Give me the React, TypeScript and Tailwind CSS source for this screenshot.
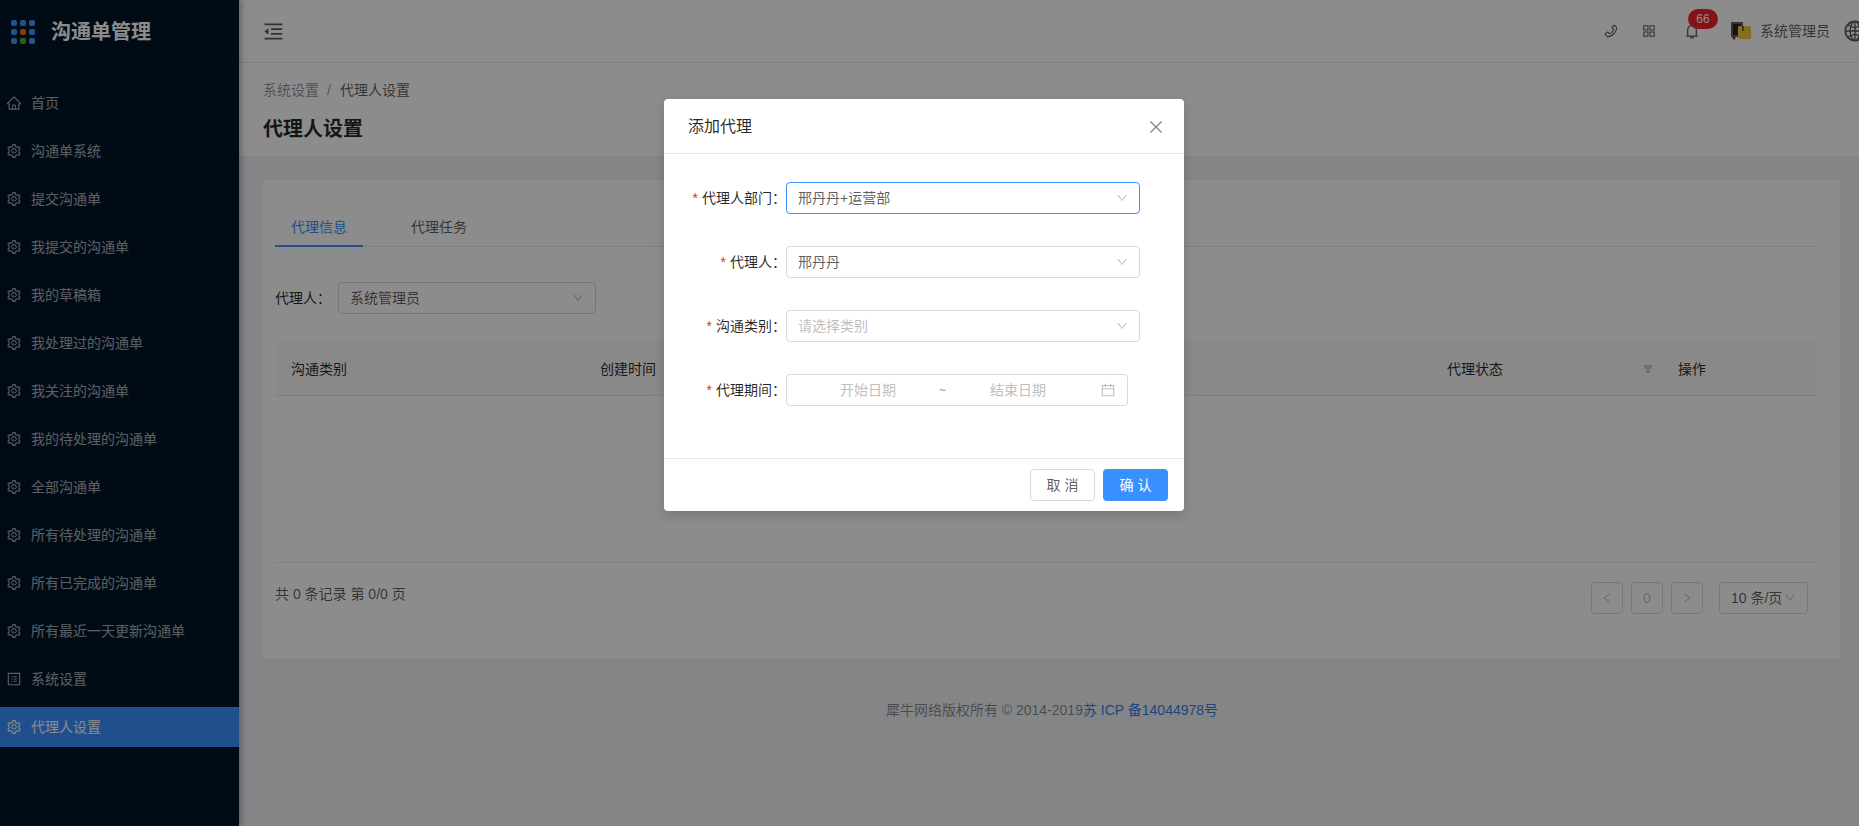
import {
  AiFillFilter,
  AiOutlineAppstore,
  AiOutlineBell,
  AiOutlineCalendar,
  AiOutlineClose,
  AiOutlineDown,
  AiOutlineGlobal,
  AiOutlineHome,
  AiOutlineLeft,
  AiOutlineMenuFold,
  AiOutlinePhone,
  AiOutlineProfile,
  AiOutlineRight,
  AiOutlineSetting,
} from "react-icons/ai";

const menu = [
  "首页",
  "沟通单系统",
  "提交沟通单",
  "我提交的沟通单",
  "我的草稿箱",
  "我处理过的沟通单",
  "我关注的沟通单",
  "我的待处理的沟通单",
  "全部沟通单",
  "所有待处理的沟通单",
  "所有已完成的沟通单",
  "所有最近一天更新沟通单",
  "系统设置",
  "代理人设置",
];

const dots = [
  "bg-[#3a9bff]", "bg-[#3a9bff]", "bg-[#3a9bff]",
  "bg-[#3a9bff]", "bg-[#f26a0f]", "bg-[#3a9bff]",
  "bg-[#3a9bff]", "bg-[#52b01c]", "bg-[#3a9bff]",
];

function Sidebar() {
  return (
    <aside className="z-10 flex w-[239px] shrink-0 flex-col bg-[#001529] text-white/65 shadow-[2px_0_6px_rgba(0,21,41,0.35)]">
      <div className="flex h-[64px] items-center pl-[11px]">
        <div className="-mt-[1px] grid grid-cols-3 gap-[3px]">
          {dots.map((c, i) => (
            <span key={i} className={`h-[6px] w-[6px] rounded-[2px] ${c}`} />
          ))}
        </div>
        <span className="ml-4 text-[20px] font-bold text-white">沟通单管理</span>
      </div>
      <nav className="mt-[19px] flex flex-col gap-2">
        {menu.map((name) => (
          <div
            key={name}
            className={`flex h-10 items-center pl-[6px] text-sm ${
              name === "代理人设置" ? "bg-[#3a90ff] text-white" : ""
            }`}
          >
            {name === "首页" ? (
              <AiOutlineHome className="mr-[9px] text-base" />
            ) : name === "系统设置" ? (
              <AiOutlineProfile className="mr-[9px] text-base" />
            ) : (
              <AiOutlineSetting className="mr-[9px] text-base" />
            )}
            {name}
          </div>
        ))}
      </nav>
    </aside>
  );
}

function Topbar() {
  return (
    <header className="flex h-[63px] shrink-0 items-center justify-between overflow-hidden border-b border-[#e8e8e8] bg-white pl-[23px]">
      <AiOutlineMenuFold className="text-[23px] text-black/65" />
      <div className="flex items-center text-sm text-black/65">
        <AiOutlinePhone className="mr-[22px] text-base" />
        <AiOutlineAppstore className="mr-[26px] text-base" />
        <div className="relative mr-[30px]">
          <AiOutlineBell className="text-lg" />
          <span className="absolute -top-[13px] left-[5px] flex h-5 w-[30px] items-center justify-center rounded-full bg-[#f5222d] text-xs text-white">
            66
          </span>
        </div>
        <svg viewBox="0 0 20 18" className="mr-[9px] h-[18px] w-5">
          <rect x="0" y="0" width="12" height="15" fill="#6a5a5e" />
          <rect x="2" y="2" width="8" height="11" fill="#2a2020" />
          <rect x="7" y="4" width="13" height="13" rx="1" fill="#f0c840" />
          <rect x="11" y="4" width="2" height="5" fill="#8a6510" />
          <circle cx="3" cy="16" r="1.5" fill="#9c1b1b" />
        </svg>
        <span className="mr-[13px]">系统管理员</span>
        <AiOutlineGlobal className="-mr-[8px] shrink-0 text-2xl" />
      </div>
    </header>
  );
}

function Select({ value, className }: { value: string; className: string }) {
  return (
    <div className={`flex h-8 items-center justify-between rounded border border-[#d9d9d9] bg-white pl-[11px] pr-[11px] text-sm text-black/65 ${className}`}>
      {value}
      <AiOutlineDown className="text-xs text-black/25" />
    </div>
  );
}

function PageBox({ children }: { children: React.ReactNode }) {
  return (
    <div className="flex h-8 w-8 items-center justify-center rounded border border-[#d9d9d9] text-sm text-black/25">
      {children}
    </div>
  );
}

function Content() {
  return (
    <div className="flex min-w-0 flex-1 flex-col bg-[#f0f2f5]">
      <Topbar />
      <div className="flex h-[93px] shrink-0 flex-col bg-white pl-6 pt-[16px]">
        <div className="text-sm leading-[22px] text-black/45">
          系统设置<span className="ml-2 mr-[9px]">/</span>
          <span className="text-black/65">代理人设置</span>
        </div>
        <h1 className="mt-[14px] text-[20px] leading-[28px] font-semibold text-black/85">代理人设置</h1>
      </div>
      <div className="ml-6 mr-[19px] mt-6 flex h-[479px] shrink-0 flex-col bg-white pl-3 pr-6 pt-[29px]">
        <div className="flex h-[38px] shrink-0 border-b border-[#e8e8e8] text-sm">
          <div className="-mb-px h-[38px] border-b-2 border-[#3a90ff] px-4 leading-[36px] text-[#3a90ff]">代理信息</div>
          <div className="ml-8 px-4 leading-[36px] text-black/65">代理任务</div>
        </div>
        <div className="mt-[35px] flex items-center text-sm text-black/85">
          <span className="w-[63px]">代理人：</span>
          <Select value="系统管理员" className="w-[258px]" />
        </div>
        <div className="mt-7 flex h-[54px] shrink-0 items-center border-b border-[#e8e8e8] bg-[#fafafa] text-sm text-black/85">
          <span className="ml-4 w-[309px]">沟通类别</span>
          <span className="w-[847px]">创建时间</span>
          <span className="w-[195px]">代理状态</span>
          <AiFillFilter className="text-xs text-[#c8c8c8]" />
          <span className="ml-6">操作</span>
        </div>
        <div className="h-[167px] shrink-0 border-b border-[#e8e8e8]" />
        <div className="mt-[19px] flex items-start justify-between text-sm text-black/65">
          <span className="mt-[2px]">共 0 条记录 第 0/0 页</span>
          <div className="mr-2 flex items-center gap-2">
            <PageBox>
              <AiOutlineLeft className="text-xs" />
            </PageBox>
            <PageBox>0</PageBox>
            <PageBox>
              <AiOutlineRight className="text-xs" />
            </PageBox>
            <div className="ml-2 flex h-8 w-[89px] items-center justify-between rounded border border-[#d9d9d9] pl-[11px] pr-[11px] text-black/65">
              10 条/页
              <AiOutlineDown className="text-xs text-black/25" />
            </div>
          </div>
        </div>
      </div>
      <footer className="mt-[40px] pl-[6px] text-center text-sm leading-[22px] text-black/45">
        犀牛网络版权所有 © 2014-2019<span className="text-[#3a80e0]">苏 ICP 备14044978号</span>
      </footer>
    </div>
  );
}

function Label({ text }: { text: string }) {
  return (
    <label className="flex w-[114px] justify-end text-sm text-black/85">
      <span className="mr-1 text-[#f5222d]">*</span>
      {text}：
    </label>
  );
}

function Modal() {
  return (
    <div className="absolute inset-0 z-20 bg-black/45 pl-[664px] pt-[99px]">
      <div className="h-[412px] w-[520px] rounded bg-white shadow-[0_4px_12px_rgba(0,0,0,0.15)]">
        <div className="flex h-[55px] items-center justify-between border-b border-[#e8e8e8] pl-6 pr-[19px] pt-[2px]">
          <span className="text-base text-black/85">添加代理</span>
          <AiOutlineClose className="text-lg text-black/45" />
        </div>
        <div className="flex h-[305px] flex-col gap-8 border-b border-[#e8e8e8] pl-2 pt-7">
          <div className="flex items-center">
            <Label text="代理人部门" />
            <Select value="邢丹丹+运营部" className="w-[354px] !border-[#3a90ff]" />
          </div>
          <div className="flex items-center">
            <Label text="代理人" />
            <Select value="邢丹丹" className="w-[354px]" />
          </div>
          <div className="flex items-center">
            <Label text="沟通类别" />
            <Select value="请选择类别" className="w-[354px] !text-[#bfbfbf]" />
          </div>
          <div className="flex items-center">
            <Label text="代理期间" />
            <div className="flex h-8 w-[342px] items-center rounded border border-[#d9d9d9] pr-[11px] text-sm text-[#bfbfbf]">
              <span className="ml-[53px] w-[56px]">开始日期</span>
              <span className="ml-[43px] text-xs text-black/45">~</span>
              <span className="ml-[44px]">结束日期</span>
              <AiOutlineCalendar className="ml-auto text-base text-black/25" />
            </div>
          </div>
        </div>
        <div className="flex h-[52px] items-center justify-end gap-2 pr-4">
          <button className="h-8 w-[65px] rounded border border-[#d9d9d9] bg-white text-sm text-black/65">取 消</button>
          <button className="h-8 w-[65px] rounded bg-[#3a90ff] text-sm text-white">确 认</button>
        </div>
      </div>
    </div>
  );
}

export default function App() {
  return (
    <div className="relative flex h-screen overflow-hidden font-['Liberation_Sans','Noto_Sans_CJK_SC',sans-serif]">
      <Sidebar />
      <Content />
      <Modal />
    </div>
  );
}
